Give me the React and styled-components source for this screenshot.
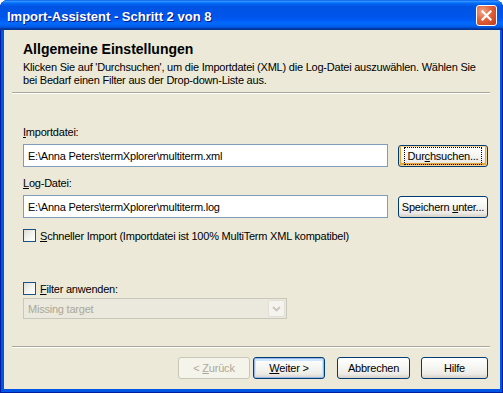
import React from "react";
import styled, { createGlobalStyle } from "styled-components";

const GlobalStyle = createGlobalStyle`
  html, body {
    margin: 0;
    padding: 0;
    background: #ffffff;
  }
  body {
    font-family: "Liberation Sans", Arial, sans-serif;
    font-size: 11px;
    letter-spacing: -0.22px;
    color: #000000;
  }
`;

const Window = styled.div`
  width: 503px;
  height: 393px;
  display: flex;
  flex-direction: column;
  border-radius: 8px 8px 0 0;
  overflow: hidden;
  background: #0055e5;
  box-shadow: inset 1px 0 #001ea0, inset -1px 0 #001ea0, inset 0 -1px #001ea0;
`;

const TitleBar = styled.div`
  height: 30px;
  flex: none;
  display: flex;
  align-items: center;
  padding: 0 6px 0 7px;
  background: linear-gradient(
    to bottom,
    #0058ee 0%,
    #3593ff 4%,
    #288eff 6%,
    #127dff 8%,
    #036ffc 10%,
    #0262ee 14%,
    #0057e5 20%,
    #0054e3 24%,
    #0055eb 56%,
    #005bf5 66%,
    #026afe 76%,
    #0062ef 86%,
    #0052d6 92%,
    #0040ab 94%,
    #003092 100%
  );
`;

const TitleText = styled.div`
  flex: 1;
  color: #ffffff;
  font-weight: bold;
  font-size: 13px;
  letter-spacing: 0;
  padding-top: 2px;
  text-shadow: 1px 1px #0a1883;
`;

const CloseButton = styled.div`
  width: 21px;
  height: 21px;
  box-sizing: border-box;
  border: 1px solid #ffffff;
  border-radius: 3px;
  display: flex;
  align-items: center;
  justify-content: center;
  background: radial-gradient(circle at 30% 30%, #f2a58b 0%, #e2613b 45%, #c23a17 100%);
`;

const Body = styled.div`
  flex: 1;
  display: flex;
  flex-direction: column;
  margin: 0 3px 4px 4px;
  background: #ece9d8;
`;

const Header = styled.div`
  padding: 11px 10px 5px 19px;
`;

const HeaderTitle = styled.div`
  font-weight: bold;
  font-size: 14px;
  letter-spacing: 0;
  line-height: 16px;
`;

const HeaderText = styled.div`
  margin-top: 4px;
  line-height: 13px;
  white-space: nowrap;
`;

const Separator = styled.div`
  height: 1px;
  margin: 0 10px 0 8px;
  background: #aca899;
  border-bottom: 1px solid #ffffff;
`;

const Content = styled.div`
  flex: 1;
  padding: 32px 12px 0 19px;
  display: flex;
  flex-direction: column;
`;

const Label = styled.div`
  line-height: 13px;
  margin-top: ${(p) => p.$top || 0}px;
  margin-bottom: 5px;
`;

const FieldRow = styled.div`
  display: flex;
  align-items: center;
  justify-content: space-between;
`;

const TextBox = styled.div`
  width: 365px;
  height: 23px;
  box-sizing: border-box;
  border: 1px solid #7f9db9;
  background: #ffffff;
  padding: 0 4px;
  display: flex;
  align-items: center;
`;

const Button = styled.div`
  width: ${(p) => p.$width}px;
  height: 22px;
  box-sizing: border-box;
  border: 1px solid ${(p) => (p.$disabled ? "#c9c7ba" : "#003c74")};
  border-radius: 3px;
  display: flex;
  align-items: center;
  justify-content: center;
  white-space: pre;
  color: ${(p) => (p.$disabled ? "#aca899" : "#000000")};
  background: ${(p) =>
    p.$disabled
      ? "#f5f4ea"
      : "linear-gradient(to bottom, #ffffff 0%, #f7f7f4 40%, #ecebe6 80%, #d6d0c5 100%)"};
  box-shadow: ${(p) =>
    p.$variant === "default"
      ? "inset 0 0 0 1px #98b8ea, inset 0 1px 0 2px #cee7ff"
      : p.$variant === "hot"
      ? "inset 0 0 0 1px #f8d58d, inset 0 -1px 0 2px #e5a536"
      : "none"};
  margin-left: ${(p) => p.$gap || 0}px;
`;

const FocusText = styled.span`
  outline: 1px dotted #000000;
  outline-offset: 2px;
  padding: 0 1px;
`;

const CheckRow = styled.div`
  display: flex;
  align-items: center;
  margin-top: ${(p) => p.$top}px;
  height: 13px;
`;

const CheckBox = styled.div`
  width: 13px;
  height: 13px;
  box-sizing: border-box;
  border: 1px solid #1c5180;
  background: linear-gradient(135deg, #dcdcd7 0%, #f6f6f3 60%, #ffffff 100%);
  margin-right: 4px;
`;

const Select = styled.div`
  margin-top: 3px;
  width: 264px;
  height: 21px;
  box-sizing: border-box;
  border: 1px solid #c9c7ba;
  background: #ebe9dd;
  display: flex;
  align-items: center;
  justify-content: space-between;
  padding: 0 1px 0 4px;
  color: #aca899;
`;

const SelectArrow = styled.div`
  width: 17px;
  height: 17px;
  box-sizing: border-box;
  border: 1px solid #e2e0d6;
  border-radius: 2px;
  background: #f4f3ee;
  display: flex;
  align-items: center;
  justify-content: center;
`;

const Footer = styled.div`
  display: flex;
  justify-content: flex-end;
  padding: 9px 12px 10px 0;
`;

const App = () => (
  <>
    <GlobalStyle />
    <Window>
      <TitleBar>
        <TitleText>Import-Assistent - Schritt 2 von 8</TitleText>
        <CloseButton>
          <svg width="11" height="11" viewBox="0 0 11 11">
            <path d="M1.5 1.5 L9.5 9.5 M9.5 1.5 L1.5 9.5" stroke="#ffffff" strokeWidth="2.2" strokeLinecap="square" />
          </svg>
        </CloseButton>
      </TitleBar>
      <Body>
        <Header>
          <HeaderTitle>Allgemeine Einstellungen</HeaderTitle>
          <HeaderText>
            Klicken Sie auf 'Durchsuchen', um die Importdatei (XML) die Log-Datei auszuwählen. Wählen Sie
            <br />
            bei Bedarf einen Filter aus der Drop-down-Liste aus.
          </HeaderText>
        </Header>
        <Separator />
        <Content>
          <Label>
            <u>I</u>mportdatei:
          </Label>
          <FieldRow>
            <TextBox>E:\Anna Peters\termXplorer\multiterm.xml</TextBox>
            <Button $width={90} $variant="hot">
              <FocusText>
                Dur<u>c</u>hsuchen...
              </FocusText>
            </Button>
          </FieldRow>
          <Label $top={10}>
            <u>L</u>og-Datei:
          </Label>
          <FieldRow>
            <TextBox>E:\Anna Peters\termXplorer\multiterm.log</TextBox>
            <Button $width={90}>
              <span>
                Speichern <u>u</u>nter...
              </span>
            </Button>
          </FieldRow>
          <CheckRow $top={11}>
            <CheckBox />
            <span>
              <u>S</u>chneller Import (Importdatei ist 100% MultiTerm XML kompatibel)
            </span>
          </CheckRow>
          <CheckRow $top={40}>
            <CheckBox />
            <span>
              <u>F</u>ilter anwenden:
            </span>
          </CheckRow>
          <Select>
            <span>Missing target</span>
            <SelectArrow>
              <svg width="9" height="6" viewBox="0 0 9 6">
                <path d="M1 1 L4.5 4.5 L8 1" stroke="#c9c7ba" strokeWidth="1.8" fill="none" />
              </svg>
            </SelectArrow>
          </Select>
        </Content>
        <Separator />
        <Footer>
          <Button $width={72} $disabled>
            <span>
              &lt; <u>Z</u>urück
            </span>
          </Button>
          <Button $width={72} $gap={3} $variant="default">
            <span>
              <u>W</u>eiter &gt;
            </span>
          </Button>
          <Button $width={73} $gap={12}>
            Abbrechen
          </Button>
          <Button $width={67} $gap={11}>
            Hilfe
          </Button>
        </Footer>
      </Body>
    </Window>
  </>
);

export default App;
